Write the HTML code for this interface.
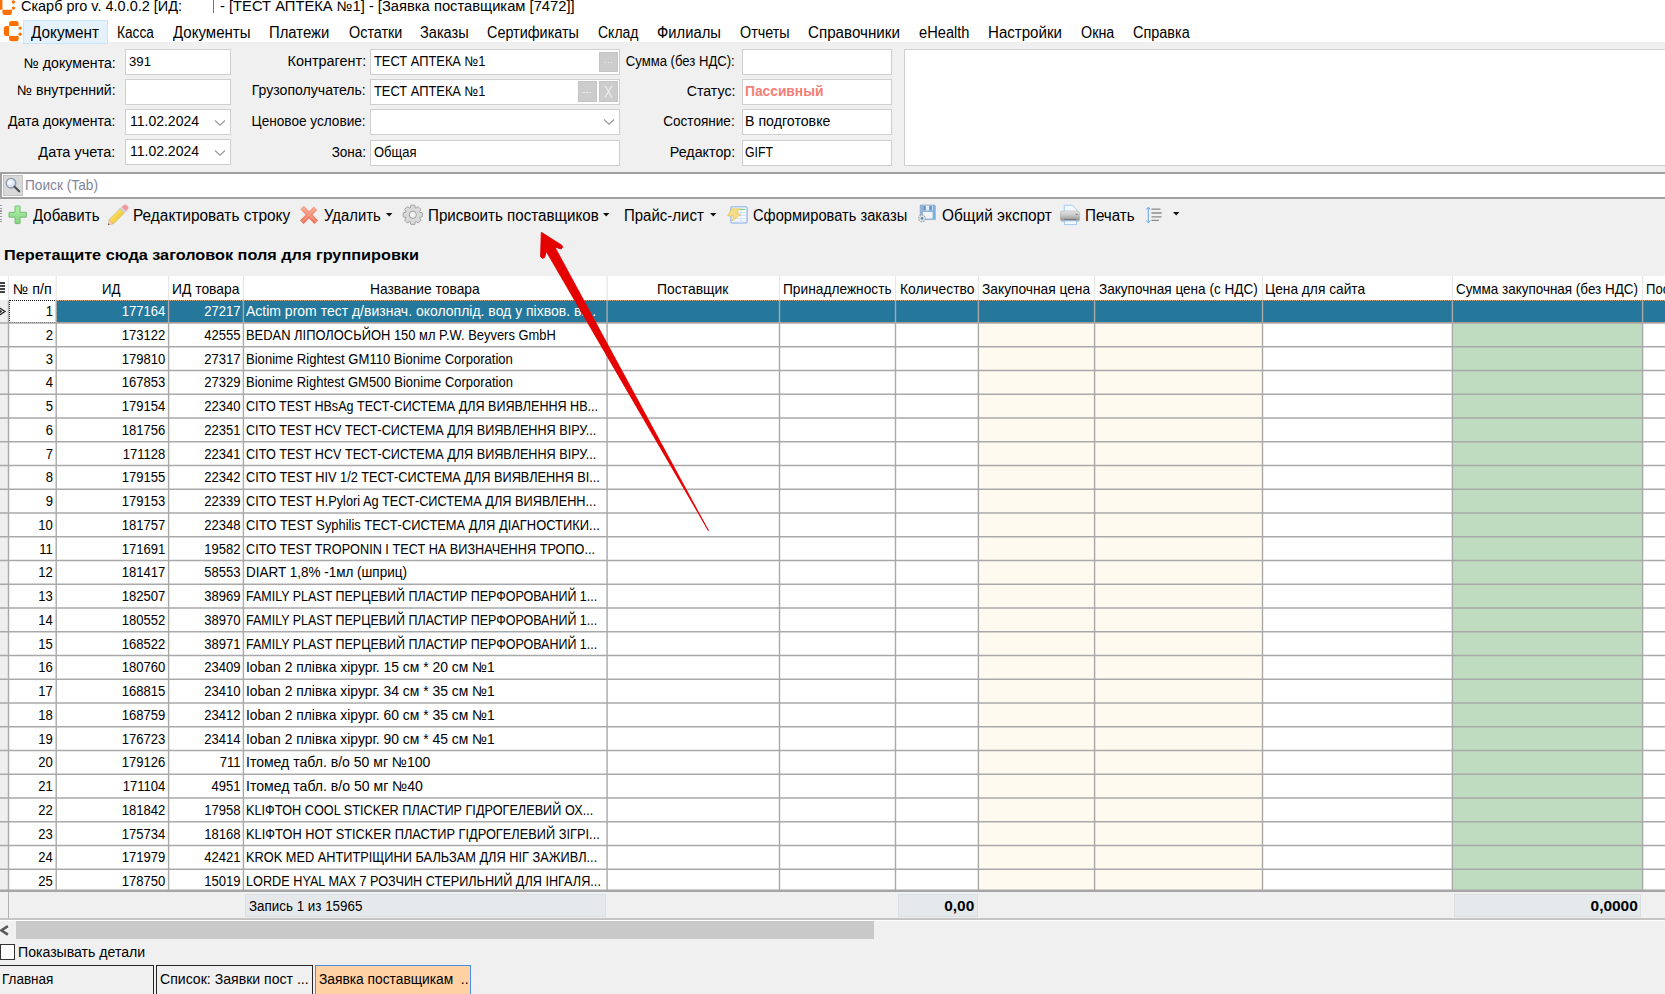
<!DOCTYPE html>
<html><head><meta charset="utf-8"><style>
html,body{margin:0;padding:0;}
body{width:1665px;height:994px;position:relative;overflow:hidden;background:#f0f0f0;font-family:"Liberation Sans", sans-serif;}
.a{position:absolute;}
.t{position:absolute;white-space:pre;}
</style></head><body>
<div class="a" style="left:0px;top:0px;width:1665px;height:42px;background:#ffffff;"></div>
<svg class="a" style="left:0;top:0" width="24" height="44"><g transform="translate(-6.7 -26.1)" fill="#ff7000">
<path d="M9.1 26 V23.2 Q9.3 21.1 11.4 21.1 H16.4 Q18.4 21.1 18.6 23.2 V26Z"/>
<path d="M9.1 26 H6 Q3.8 26.2 3.8 28.4 V33.6 Q3.8 35.8 6 35.9 H9.1Z"/>
<path d="M9.1 35.9 H18.6 V38.9 Q18.4 41.2 16.4 41.2 H11.4 Q9.3 41.2 9.1 38.9Z"/>
<circle cx="20.1" cy="28.1" r="1.65"/><circle cx="20.1" cy="34.2" r="1.65"/></g></svg>
<svg class="a" style="left:0;top:0" width="24" height="44"><g transform="translate(0 0)" fill="#ff7000">
<path d="M9.1 26 V23.2 Q9.3 21.1 11.4 21.1 H16.4 Q18.4 21.1 18.6 23.2 V26Z"/>
<path d="M9.1 26 H6 Q3.8 26.2 3.8 28.4 V33.6 Q3.8 35.8 6 35.9 H9.1Z"/>
<path d="M9.1 35.9 H18.6 V38.9 Q18.4 41.2 16.4 41.2 H11.4 Q9.3 41.2 9.1 38.9Z"/>
<circle cx="20.1" cy="28.1" r="1.65"/><circle cx="20.1" cy="34.2" r="1.65"/></g></svg>
<div class="t" id="t0" style="transform:scaleX(1.0478);top:-1px;font-size:13.8px;line-height:15px;height:15px;color:#000;left:21px;transform-origin:0 0;">Скарб pro v. 4.0.0.2 [ИД:</div>
<div class="a" style="left:213px;top:0px;width:1px;height:13px;background:#3d7fd0;"></div>
<div class="t" id="t1" style="transform:scaleX(1.0675);top:-1px;font-size:13.8px;line-height:15px;height:15px;color:#000;left:219.8px;transform-origin:0 0;">- [ТЕСТ АПТЕКА №1] - [Заявка поставщикам [7472]]</div>
<div class="a" style="left:23px;top:20px;width:85px;height:24px;background:#e5f1fb;border:1px solid #cde4f7;box-sizing:border-box;"></div>
<div class="t" id="t2" style="transform:scaleX(0.9828);top:24px;font-size:15.6px;line-height:17px;height:17px;color:#000;left:31px;transform-origin:0 0;">Документ</div>
<div class="t" id="t3" style="transform:scaleX(0.8779);top:24px;font-size:15.6px;line-height:17px;height:17px;color:#000;left:117.1px;transform-origin:0 0;">Касса</div>
<div class="t" id="t4" style="transform:scaleX(0.9640);top:24px;font-size:15.6px;line-height:17px;height:17px;color:#000;left:173px;transform-origin:0 0;">Документы</div>
<div class="t" id="t5" style="transform:scaleX(0.9534);top:24px;font-size:15.6px;line-height:17px;height:17px;color:#000;left:269.4px;transform-origin:0 0;">Платежи</div>
<div class="t" id="t6" style="transform:scaleX(0.9222);top:24px;font-size:15.6px;line-height:17px;height:17px;color:#000;left:348.6px;transform-origin:0 0;">Остатки</div>
<div class="t" id="t7" style="transform:scaleX(0.9343);top:24px;font-size:15.6px;line-height:17px;height:17px;color:#000;left:419.8px;transform-origin:0 0;">Заказы</div>
<div class="t" id="t8" style="transform:scaleX(0.9235);top:24px;font-size:15.6px;line-height:17px;height:17px;color:#000;left:487.4px;transform-origin:0 0;">Сертификаты</div>
<div class="t" id="t9" style="transform:scaleX(0.8972);top:24px;font-size:15.6px;line-height:17px;height:17px;color:#000;left:598.2px;transform-origin:0 0;">Склад</div>
<div class="t" id="t10" style="transform:scaleX(0.9486);top:24px;font-size:15.6px;line-height:17px;height:17px;color:#000;left:656.8px;transform-origin:0 0;">Филиалы</div>
<div class="t" id="t11" style="transform:scaleX(0.9201);top:24px;font-size:15.6px;line-height:17px;height:17px;color:#000;left:739.6px;transform-origin:0 0;">Отчеты</div>
<div class="t" id="t12" style="transform:scaleX(0.9728);top:24px;font-size:15.6px;line-height:17px;height:17px;color:#000;left:808.1px;transform-origin:0 0;">Справочники</div>
<div class="t" id="t13" style="transform:scaleX(0.9395);top:24px;font-size:15.6px;line-height:17px;height:17px;color:#000;left:918.9px;transform-origin:0 0;">eHealth</div>
<div class="t" id="t14" style="transform:scaleX(0.9664);top:24px;font-size:15.6px;line-height:17px;height:17px;color:#000;left:988.1px;transform-origin:0 0;">Настройки</div>
<div class="t" id="t15" style="transform:scaleX(0.9186);top:24px;font-size:15.6px;line-height:17px;height:17px;color:#000;left:1080.9px;transform-origin:0 0;">Окна</div>
<div class="t" id="t16" style="transform:scaleX(0.9267);top:24px;font-size:15.6px;line-height:17px;height:17px;color:#000;left:1133.2px;transform-origin:0 0;">Справка</div>
<div class="t" id="t17" style="transform:scaleX(1.0251);top:56px;font-size:13.8px;line-height:15px;height:15px;color:#000;right:1549.5px;transform-origin:100% 0;">№ документа:</div>
<div class="t" id="t18" style="transform:scaleX(1.0213);top:83px;font-size:13.8px;line-height:15px;height:15px;color:#000;right:1549.5px;transform-origin:100% 0;">№ внутренний:</div>
<div class="t" id="t19" style="transform:scaleX(1.0190);top:114px;font-size:13.8px;line-height:15px;height:15px;color:#000;right:1549.5px;transform-origin:100% 0;">Дата документа:</div>
<div class="t" id="t20" style="transform:scaleX(1.0496);top:145px;font-size:13.8px;line-height:15px;height:15px;color:#000;right:1549.5px;transform-origin:100% 0;">Дата учета:</div>
<div class="a" style="left:125px;top:49px;width:106px;height:26px;background:#ffffff;border:1px solid #cfcfcf;box-sizing:border-box;"></div>
<div class="a" style="left:125px;top:79px;width:106px;height:26px;background:#ffffff;border:1px solid #cfcfcf;box-sizing:border-box;"></div>
<div class="a" style="left:125px;top:109px;width:106px;height:26px;background:#ffffff;border:1px solid #cfcfcf;box-sizing:border-box;"></div>
<div class="a" style="left:125px;top:139px;width:106px;height:26px;background:#ffffff;border:1px solid #cfcfcf;box-sizing:border-box;"></div>
<div class="t" id="t21" style="transform:scaleX(0.9764);top:54px;font-size:13.5px;line-height:15px;height:15px;color:#000;left:129px;transform-origin:0 0;">391</div>
<div class="t" id="t22" style="transform:scaleX(1.0142);top:114px;font-size:13.8px;line-height:15px;height:15px;color:#000;left:130.2px;transform-origin:0 0;">11.02.2024</div>
<div class="t" id="t23" style="transform:scaleX(1.0142);top:144px;font-size:13.8px;line-height:15px;height:15px;color:#000;left:130.2px;transform-origin:0 0;">11.02.2024</div>
<svg class="a" style="left:214px;top:118.5px" width="12" height="8"><path d="M1 1.5 L6 6.2 L11 1.5" fill="none" stroke="#9a9a9a" stroke-width="1.2"/></svg>
<svg class="a" style="left:214px;top:148.5px" width="12" height="8"><path d="M1 1.5 L6 6.2 L11 1.5" fill="none" stroke="#9a9a9a" stroke-width="1.2"/></svg>
<div class="t" id="t24" style="transform:scaleX(1.0456);top:54px;font-size:13.8px;line-height:15px;height:15px;color:#000;right:1299px;transform-origin:100% 0;">Контрагент:</div>
<div class="t" id="t25" style="transform:scaleX(1.0200);top:83px;font-size:13.8px;line-height:15px;height:15px;color:#000;right:1299px;transform-origin:100% 0;">Грузополучатель:</div>
<div class="t" id="t26" style="transform:scaleX(0.9862);top:114px;font-size:13.8px;line-height:15px;height:15px;color:#000;right:1299px;transform-origin:100% 0;">Ценовое условие:</div>
<div class="t" id="t27" style="transform:scaleX(0.9818);top:145px;font-size:13.8px;line-height:15px;height:15px;color:#000;right:1299px;transform-origin:100% 0;">Зона:</div>
<div class="a" style="left:370px;top:49px;width:250px;height:26px;background:#ffffff;border:1px solid #cfcfcf;box-sizing:border-box;"></div>
<div class="a" style="left:370px;top:79px;width:250px;height:26px;background:#ffffff;border:1px solid #cfcfcf;box-sizing:border-box;"></div>
<div class="a" style="left:370px;top:109px;width:250px;height:26px;background:#ffffff;border:1px solid #cfcfcf;box-sizing:border-box;"></div>
<div class="a" style="left:370px;top:140px;width:250px;height:26px;background:#ffffff;border:1px solid #cfcfcf;box-sizing:border-box;"></div>
<div class="t" id="t28" style="transform:scaleX(0.9327);top:54px;font-size:13.8px;line-height:15px;height:15px;color:#000;left:374.3px;transform-origin:0 0;">ТЕСТ АПТЕКА №1</div>
<div class="t" id="t29" style="transform:scaleX(0.9327);top:84px;font-size:13.8px;line-height:15px;height:15px;color:#000;left:374.3px;transform-origin:0 0;">ТЕСТ АПТЕКА №1</div>
<div class="t" id="t30" style="transform:scaleX(0.9415);top:145px;font-size:13.8px;line-height:15px;height:15px;color:#000;left:374.3px;transform-origin:0 0;">Общая</div>
<div class="a" style="left:599px;top:51.5px;width:19px;height:20.5px;background:#cccccc;border:1px solid #c4c4c4;box-sizing:border-box;"></div>
<div class="a" style="left:604.5px;top:61.75px;width:1.6px;height:1.2px;background:#ececec;"></div>
<div class="a" style="left:607.5px;top:61.75px;width:1.6px;height:1.2px;background:#ececec;"></div>
<div class="a" style="left:610.5px;top:61.75px;width:1.6px;height:1.2px;background:#ececec;"></div>
<div class="a" style="left:578px;top:81.2px;width:18.5px;height:21px;background:#cccccc;border:1px solid #c4c4c4;box-sizing:border-box;"></div>
<div class="a" style="left:583.25px;top:91.7px;width:1.6px;height:1.2px;background:#ececec;"></div>
<div class="a" style="left:586.25px;top:91.7px;width:1.6px;height:1.2px;background:#ececec;"></div>
<div class="a" style="left:589.25px;top:91.7px;width:1.6px;height:1.2px;background:#ececec;"></div>
<div class="a" style="left:599px;top:81.2px;width:19px;height:21px;background:#cccccc;border:1px solid #c4c4c4;box-sizing:border-box;"></div>
<svg class="a" style="left:599px;top:81.2px" width="19" height="21"><path d="M6.0 4.5 L13.0 16.5 M13.0 4.5 L6.0 16.5" stroke="#ededed" stroke-width="1.3"/></svg>
<svg class="a" style="left:603px;top:118px" width="12" height="8"><path d="M1 1.5 L6 6.2 L11 1.5" fill="none" stroke="#9a9a9a" stroke-width="1.2"/></svg>
<div class="t" id="t31" style="transform:scaleX(0.9498);top:54px;font-size:13.8px;line-height:15px;height:15px;color:#000;right:930px;transform-origin:100% 0;">Сумма (без НДС):</div>
<div class="t" id="t32" style="transform:scaleX(1.0263);top:84px;font-size:13.8px;line-height:15px;height:15px;color:#000;right:930px;transform-origin:100% 0;">Статус:</div>
<div class="t" id="t33" style="transform:scaleX(0.9837);top:114px;font-size:13.8px;line-height:15px;height:15px;color:#000;right:930px;transform-origin:100% 0;">Состояние:</div>
<div class="t" id="t34" style="transform:scaleX(1.0342);top:145px;font-size:13.8px;line-height:15px;height:15px;color:#000;right:930px;transform-origin:100% 0;">Редактор:</div>
<div class="a" style="left:741.5px;top:49px;width:150px;height:26px;background:#ffffff;border:1px solid #cfcfcf;box-sizing:border-box;"></div>
<div class="a" style="left:741.5px;top:79px;width:150px;height:26px;background:#ffffff;border:1px solid #cfcfcf;box-sizing:border-box;"></div>
<div class="a" style="left:741.5px;top:109px;width:150px;height:26px;background:#ffffff;border:1px solid #cfcfcf;box-sizing:border-box;"></div>
<div class="a" style="left:741.5px;top:140px;width:150px;height:26px;background:#ffffff;border:1px solid #cfcfcf;box-sizing:border-box;"></div>
<div class="t" id="t35" style="transform:scaleX(0.9987);top:84px;font-size:13.8px;line-height:15px;height:15px;color:#f47e76;font-weight:bold;left:745.4px;transform-origin:0 0;">Пассивный</div>
<div class="t" id="t36" style="transform:scaleX(1.0281);top:114px;font-size:13.8px;line-height:15px;height:15px;color:#000;left:745.4px;transform-origin:0 0;">В подготовке</div>
<div class="t" id="t37" style="transform:scaleX(0.8911);top:145px;font-size:13.8px;line-height:15px;height:15px;color:#000;left:745.4px;transform-origin:0 0;">GIFT</div>
<div class="a" style="left:904px;top:49px;width:800px;height:117px;background:#ffffff;border:1px solid #cfcfcf;box-sizing:border-box;"></div>
<div class="a" style="left:0px;top:172px;width:1665px;height:27px;background:#ffffff;border:2px solid #a0a0a0;box-sizing:border-box;border-right:none;"></div>
<div class="a" style="left:3px;top:175px;width:20px;height:21px;background:#d9d9d9;border:1px solid #c2c2c2;box-sizing:border-box;"></div>
<svg class="a" style="left:4px;top:176px" width="18" height="19" viewBox="0 0 18 19">
<defs><radialGradient id="mg" cx="0.4" cy="0.4" r="0.6"><stop offset="0" stop-color="#ffffff"/><stop offset="1" stop-color="#c7d3ea"/></radialGradient></defs>
<circle cx="7" cy="7.2" r="4.8" fill="url(#mg)" stroke="#8d98ad" stroke-width="1.3"/>
<path d="M10.5 10.8 L15.2 15.3" stroke="#4f4f4f" stroke-width="2.2" stroke-linecap="round"/></svg>
<div class="t" id="t38" style="transform:scaleX(0.9584);top:177px;font-size:14.3px;line-height:16px;height:16px;color:#7f849c;left:24.9px;transform-origin:0 0;">Поиск (Tab)</div>
<div class="a" style="left:0px;top:205.0px;width:2px;height:1.3px;background:#9a9a9a;"></div>
<div class="a" style="left:0px;top:207.7px;width:2px;height:1.3px;background:#9a9a9a;"></div>
<div class="a" style="left:0px;top:210.4px;width:2px;height:1.3px;background:#9a9a9a;"></div>
<div class="a" style="left:0px;top:213.1px;width:2px;height:1.3px;background:#9a9a9a;"></div>
<div class="a" style="left:0px;top:215.8px;width:2px;height:1.3px;background:#9a9a9a;"></div>
<div class="a" style="left:0px;top:218.5px;width:2px;height:1.3px;background:#9a9a9a;"></div>
<div class="a" style="left:0px;top:221.2px;width:2px;height:1.3px;background:#9a9a9a;"></div>
<div class="t" id="t39" style="transform:scaleX(0.9649);top:207px;font-size:15.6px;line-height:17px;height:17px;color:#000;left:32.5px;transform-origin:0 0;">Добавить</div>
<div class="t" id="t40" style="transform:scaleX(0.9878);top:207px;font-size:15.6px;line-height:17px;height:17px;color:#000;left:133px;transform-origin:0 0;">Редактировать строку</div>
<div class="t" id="t41" style="transform:scaleX(0.9539);top:207px;font-size:15.6px;line-height:17px;height:17px;color:#000;left:323.8px;transform-origin:0 0;">Удалить</div>
<div class="t" id="t42" style="transform:scaleX(0.9709);top:207px;font-size:15.6px;line-height:17px;height:17px;color:#000;left:428px;transform-origin:0 0;">Присвоить поставщиков</div>
<div class="t" id="t43" style="transform:scaleX(0.9613);top:207px;font-size:15.6px;line-height:17px;height:17px;color:#000;left:623.7px;transform-origin:0 0;">Прайс-лист</div>
<div class="t" id="t44" style="transform:scaleX(0.9403);top:207px;font-size:15.6px;line-height:17px;height:17px;color:#000;left:752.7px;transform-origin:0 0;">Сформировать заказы</div>
<div class="t" id="t45" style="transform:scaleX(0.9902);top:207px;font-size:15.6px;line-height:17px;height:17px;color:#000;left:941.6px;transform-origin:0 0;">Общий экспорт</div>
<div class="t" id="t46" style="transform:scaleX(0.9727);top:207px;font-size:15.6px;line-height:17px;height:17px;color:#000;left:1085.4px;transform-origin:0 0;">Печать</div>
<svg class="a" style="left:385.6px;top:212.5px" width="8" height="5"><path d="M0 0 H6.4 L3.2 3.6Z" fill="#111"/></svg>
<svg class="a" style="left:603px;top:212.5px" width="8" height="5"><path d="M0 0 H6.4 L3.2 3.6Z" fill="#111"/></svg>
<svg class="a" style="left:710px;top:212.5px" width="8" height="5"><path d="M0 0 H6.4 L3.2 3.6Z" fill="#111"/></svg>
<svg class="a" style="left:1172.6px;top:212.2px" width="8" height="5"><path d="M0 0 H6.4 L3.2 3.6Z" fill="#111"/></svg>
<svg class="a" style="left:0;top:165px" width="30" height="62">
<defs><linearGradient id="pg" x1="0" y1="0" x2="0" y2="1"><stop offset="0" stop-color="#aef2a8"/><stop offset="1" stop-color="#86d283"/></linearGradient></defs>
<path d="M15.4 41 H19.7 Q20.1 41 20.1 41.4 V47.3 H26 Q26.4 47.3 26.4 47.7 V51.8 Q26.4 52.2 26 52.2 H20.1 V58.2 Q20.1 58.6 19.7 58.6 H15.4 Q15 58.6 15 58.2 V52.2 H9.4 Q9 52.2 9 51.8 V47.7 Q9 47.3 9.4 47.3 H15 V41.4 Q15 41 15.4 41Z" fill="url(#pg)" stroke="#6db86b" stroke-width="0.9"/></svg>
<svg class="a" style="left:100px;top:200px" width="30" height="28">
<defs><linearGradient id="pcl" x1="0" y1="0" x2="1" y2="1"><stop offset="0" stop-color="#fff3b0"/><stop offset="0.5" stop-color="#f5d54c"/><stop offset="1" stop-color="#d9ae2a"/></linearGradient></defs>
<path d="M9.06 19.7 L20.02 8.74 L24.26 12.98 L13.3 23.94Z" fill="url(#pcl)" stroke="#d2b04a" stroke-width="0.6"/>
<path d="M20.02 8.74 L21.79 6.97 L26.03 11.21 L24.26 12.98Z" fill="#d6d6d6" stroke="#b8b8b8" stroke-width="0.5"/>
<path d="M21.79 6.97 L23.2 5.56 A3 3 0 0 1 27.44 9.8 L26.03 11.21Z" fill="#f39a9a"/>
<path d="M9.06 19.7 L13.3 23.94 L8 25Z" fill="#f6c9a8" stroke="#e0a080" stroke-width="0.4"/>
<path d="M8 25 L8.35 23.23 L9.77 24.65Z" fill="#555"/></svg>
<svg class="a" style="left:295px;top:200px" width="28" height="28">
<defs><linearGradient id="xg" x1="0" y1="0" x2="0" y2="1"><stop offset="0" stop-color="#f7a28c"/><stop offset="1" stop-color="#ee6f58"/></linearGradient></defs>
<path d="M7.1 7.5 L21.3 22.2 M20.5 8.2 L6.8 22.2" stroke="url(#xg)" stroke-width="5" stroke-linecap="butt" fill="none"/>
<path d="M7.1 7.5 L21.3 22.2 M20.5 8.2 L6.8 22.2" stroke="#fbb8a6" stroke-width="1.2" stroke-opacity="0.6" fill="none"/></svg>
<svg class="a" style="left:398px;top:200px" width="30" height="30">
<path d="M12.23 7.97 L12.85 5.20 L16.75 5.20 L17.37 7.97 L17.81 8.15 L20.21 6.63 L22.97 9.39 L21.45 11.79 L21.63 12.23 L24.40 12.85 L24.40 16.75 L21.63 17.37 L21.45 17.81 L22.97 20.21 L20.21 22.97 L17.81 21.45 L17.37 21.63 L16.75 24.40 L12.85 24.40 L12.23 21.63 L11.79 21.45 L9.39 22.97 L6.63 20.21 L8.15 17.81 L7.97 17.37 L5.20 16.75 L5.20 12.85 L7.97 12.23 L8.15 11.79 L6.63 9.39 L9.39 6.63 L11.79 8.15Z" fill="#dadada" stroke="#a2a2a2" stroke-width="1" stroke-linejoin="round"/>
<circle cx="14.8" cy="14.8" r="3.6" fill="#f2f2f2" stroke="#9c9c9c" stroke-width="1"/></svg>
<svg class="a" style="left:722px;top:200px" width="30" height="30">
<rect x="8.9" y="6.8" width="16.2" height="16.2" rx="1.5" fill="#fbfdff" stroke="#a6c2e8" stroke-width="1.6"/>
<path d="M11 12.5 H24 M11 15.5 H24 M11 18.5 H24 M11 21 H24 M19 10 V22.5" stroke="#cfe0f5" stroke-width="0.9"/>
<path d="M18 9.4 H23.3" stroke="#8cca86" stroke-width="1.3"/>
<path d="M5.7 15.7 L9.7 8.8 L18.1 8.8 L14.2 13.2 L18.7 14.6 L10 21 L12 16.2Z" fill="#f5dc86" stroke="#e2bf52" stroke-width="0.7" stroke-linejoin="round"/></svg>
<svg class="a" style="left:912px;top:200px" width="30" height="30">
<defs><linearGradient id="fg" x1="0" y1="0" x2="1" y2="1"><stop offset="0" stop-color="#9fb4d6"/><stop offset="1" stop-color="#6fb4e0"/></linearGradient></defs>
<path d="M8.2 5 H22.5 L23.3 5.8 V19.6 H8.2Z" fill="url(#fg)" stroke="#7f9cc0" stroke-width="0.6"/>
<rect x="11" y="5.6" width="9.6" height="4.8" fill="#e9eef4"/>
<rect x="11.2" y="5.8" width="2.6" height="4.5" fill="#5d95c8"/><rect x="17.2" y="5.8" width="2.6" height="4.5" fill="#5d95c8"/>
<rect x="11" y="12" width="9.6" height="6.6" fill="#f2f2f2"/>
<circle cx="10" cy="18.4" r="3.3" fill="#e6e6e6" stroke="#a9a9a9" stroke-width="1.3" stroke-dasharray="1.6 0.9"/>
<circle cx="10" cy="18.4" r="1.4" fill="#5b8fc0"/></svg>
<svg class="a" style="left:1056px;top:200px" width="30" height="30">
<defs><linearGradient id="prg" x1="0" y1="0" x2="0" y2="1"><stop offset="0" stop-color="#e4e4e4"/><stop offset="0.45" stop-color="#c4c4c4"/><stop offset="0.8" stop-color="#9a9a9a"/><stop offset="1" stop-color="#d0d0d0"/></linearGradient></defs>
<path d="M8.3 5.2 H16.3 L20.7 9.5 V11.5 H8.3Z" fill="#f2f8ff" stroke="#9fc6f0" stroke-width="0.9"/>
<rect x="4.3" y="11" width="19.4" height="10.6" rx="2.6" fill="url(#prg)" stroke="#b2b2b2" stroke-width="0.6"/>
<path d="M8.3 19.8 H20.6" stroke="#6a6a6a" stroke-width="1.1"/>
<rect x="19.6" y="13.8" width="2" height="1.1" fill="#777"/>
<rect x="8.5" y="20.9" width="12" height="3.7" fill="#f2f8ff" stroke="#9fc6f0" stroke-width="0.9"/></svg>
<svg class="a" style="left:1140px;top:204px" width="26" height="22">
<path d="M8.3 3.5 V18.5 M6.3 5.5 L8.3 3.2 L10.3 5.5 M6.3 16.5 L8.3 18.8 L10.3 16.5" stroke="#6aa6e8" stroke-width="1" fill="none"/>
<path d="M11.5 5.2 H20.5 M11.5 9 H21.6 M11.5 12.8 H21.6 M11.5 16.3 H19" stroke="#8a8a8a" stroke-width="1.3"/></svg>
<div class="t" id="t47" style="transform:scaleX(1.1135);top:247px;font-size:14.6px;line-height:16px;height:16px;color:#000;font-weight:bold;left:4px;transform-origin:0 0;">Перетащите сюда заголовок поля для группировки</div>
<div class="a" style="left:0px;top:276px;width:1665px;height:24.30000000000001px;background:#ffffff;"></div>
<div class="a" style="left:0px;top:300px;width:8.5px;height:591px;background:#efefef;"></div>
<div class="a" style="left:8.5px;top:300px;width:1656.5px;height:591px;background:#ffffff;"></div>
<div class="a" style="left:979px;top:322px;width:115.59999999999991px;height:569px;background:#fffaf0;"></div>
<div class="a" style="left:1095.4px;top:322px;width:167.0999999999999px;height:569px;background:#fffaf0;"></div>
<div class="a" style="left:1453.2px;top:322px;width:189.39999999999986px;height:569px;background:#c0dcc0;"></div>
<div class="a" style="left:57px;top:300px;width:1608px;height:23px;background:#25789b;"></div>
<div class="a" style="left:57px;top:300px;width:1608px;height:23px;box-sizing:border-box;border-top:1px dotted #e0a070;border-bottom:1px dotted #e0a070"></div>
<div class="a" style="left:9px;top:300px;width:47.5px;height:23px;box-sizing:border-box;border:1px dotted #111;background:#fff"></div>
<svg class="a" style="left:0;top:0" width="1665" height="994"><line x1="0" y1="322.95" x2="1665" y2="322.95" stroke="#a9a9a9" stroke-width="1.4"/><line x1="0" y1="346.70" x2="1665" y2="346.70" stroke="#a9a9a9" stroke-width="1.4"/><line x1="0" y1="370.45" x2="1665" y2="370.45" stroke="#a9a9a9" stroke-width="1.4"/><line x1="0" y1="394.20" x2="1665" y2="394.20" stroke="#a9a9a9" stroke-width="1.4"/><line x1="0" y1="417.95" x2="1665" y2="417.95" stroke="#a9a9a9" stroke-width="1.4"/><line x1="0" y1="441.70" x2="1665" y2="441.70" stroke="#a9a9a9" stroke-width="1.4"/><line x1="0" y1="465.45" x2="1665" y2="465.45" stroke="#a9a9a9" stroke-width="1.4"/><line x1="0" y1="489.20" x2="1665" y2="489.20" stroke="#a9a9a9" stroke-width="1.4"/><line x1="0" y1="512.95" x2="1665" y2="512.95" stroke="#a9a9a9" stroke-width="1.4"/><line x1="0" y1="536.70" x2="1665" y2="536.70" stroke="#a9a9a9" stroke-width="1.4"/><line x1="0" y1="560.45" x2="1665" y2="560.45" stroke="#a9a9a9" stroke-width="1.4"/><line x1="0" y1="584.20" x2="1665" y2="584.20" stroke="#a9a9a9" stroke-width="1.4"/><line x1="0" y1="607.95" x2="1665" y2="607.95" stroke="#a9a9a9" stroke-width="1.4"/><line x1="0" y1="631.70" x2="1665" y2="631.70" stroke="#a9a9a9" stroke-width="1.4"/><line x1="0" y1="655.45" x2="1665" y2="655.45" stroke="#a9a9a9" stroke-width="1.4"/><line x1="0" y1="679.20" x2="1665" y2="679.20" stroke="#a9a9a9" stroke-width="1.4"/><line x1="0" y1="702.95" x2="1665" y2="702.95" stroke="#a9a9a9" stroke-width="1.4"/><line x1="0" y1="726.70" x2="1665" y2="726.70" stroke="#a9a9a9" stroke-width="1.4"/><line x1="0" y1="750.45" x2="1665" y2="750.45" stroke="#a9a9a9" stroke-width="1.4"/><line x1="0" y1="774.20" x2="1665" y2="774.20" stroke="#a9a9a9" stroke-width="1.4"/><line x1="0" y1="797.95" x2="1665" y2="797.95" stroke="#a9a9a9" stroke-width="1.4"/><line x1="0" y1="821.70" x2="1665" y2="821.70" stroke="#a9a9a9" stroke-width="1.4"/><line x1="0" y1="845.45" x2="1665" y2="845.45" stroke="#a9a9a9" stroke-width="1.4"/><line x1="0" y1="869.20" x2="1665" y2="869.20" stroke="#a9a9a9" stroke-width="1.4"/><line x1="8.50" y1="300.30" x2="8.50" y2="891" stroke="#a9a9a9" stroke-width="1.4"/><line x1="8.50" y1="276" x2="8.50" y2="300.30" stroke="#e6e6e6" stroke-width="1.2"/><line x1="56.20" y1="300.30" x2="56.20" y2="891" stroke="#a9a9a9" stroke-width="1.4"/><line x1="56.20" y1="276" x2="56.20" y2="300.30" stroke="#e6e6e6" stroke-width="1.2"/><line x1="168.60" y1="300.30" x2="168.60" y2="891" stroke="#a9a9a9" stroke-width="1.4"/><line x1="168.60" y1="276" x2="168.60" y2="300.30" stroke="#e6e6e6" stroke-width="1.2"/><line x1="243.40" y1="300.30" x2="243.40" y2="891" stroke="#a9a9a9" stroke-width="1.4"/><line x1="243.40" y1="276" x2="243.40" y2="300.30" stroke="#e6e6e6" stroke-width="1.2"/><line x1="607.10" y1="300.30" x2="607.10" y2="891" stroke="#a9a9a9" stroke-width="1.4"/><line x1="607.10" y1="276" x2="607.10" y2="300.30" stroke="#e6e6e6" stroke-width="1.2"/><line x1="779.50" y1="300.30" x2="779.50" y2="891" stroke="#a9a9a9" stroke-width="1.4"/><line x1="779.50" y1="276" x2="779.50" y2="300.30" stroke="#e6e6e6" stroke-width="1.2"/><line x1="895.50" y1="300.30" x2="895.50" y2="891" stroke="#a9a9a9" stroke-width="1.4"/><line x1="895.50" y1="276" x2="895.50" y2="300.30" stroke="#e6e6e6" stroke-width="1.2"/><line x1="978.40" y1="300.30" x2="978.40" y2="891" stroke="#a9a9a9" stroke-width="1.4"/><line x1="978.40" y1="276" x2="978.40" y2="300.30" stroke="#e6e6e6" stroke-width="1.2"/><line x1="1094.60" y1="300.30" x2="1094.60" y2="891" stroke="#a9a9a9" stroke-width="1.4"/><line x1="1094.60" y1="276" x2="1094.60" y2="300.30" stroke="#e6e6e6" stroke-width="1.2"/><line x1="1262.50" y1="300.30" x2="1262.50" y2="891" stroke="#a9a9a9" stroke-width="1.4"/><line x1="1262.50" y1="276" x2="1262.50" y2="300.30" stroke="#e6e6e6" stroke-width="1.2"/><line x1="1452.40" y1="300.30" x2="1452.40" y2="891" stroke="#a9a9a9" stroke-width="1.4"/><line x1="1452.40" y1="276" x2="1452.40" y2="300.30" stroke="#e6e6e6" stroke-width="1.2"/><line x1="1642.60" y1="300.30" x2="1642.60" y2="891" stroke="#a9a9a9" stroke-width="1.4"/><line x1="1642.60" y1="276" x2="1642.60" y2="300.30" stroke="#e6e6e6" stroke-width="1.2"/><line x1="0" y1="890.8" x2="1665" y2="890.8" stroke="#a6a6a6" stroke-width="2.4"/></svg>
<div class="a" style="left:0px;top:282px;width:5px;height:1.6px;background:#444;"></div>
<div class="a" style="left:0px;top:285px;width:5px;height:1.6px;background:#444;"></div>
<div class="a" style="left:0px;top:288px;width:5px;height:1.6px;background:#444;"></div>
<div class="a" style="left:0px;top:291px;width:5px;height:1.6px;background:#444;"></div>
<svg class="a" style="left:0;top:306px" width="8" height="11"><path d="M-1 1.5 L5 5.5 L-1 9.5" fill="none" stroke="#222" stroke-width="1.3"/><circle cx="0.5" cy="5.5" r="1.2" fill="#222"/></svg>
<div class="t" id="t48" style="transform:scaleX(1.0086);top:281px;font-size:14.2px;line-height:16px;height:16px;color:#000;left:12.7px;transform-origin:0 0;">№ п/п</div>
<div class="t" id="t49" style="transform:scaleX(0.9338);top:281px;font-size:14.2px;line-height:16px;height:16px;color:#000;left:101.7px;transform-origin:0 0;">ИД</div>
<div class="t" id="t50" style="transform:scaleX(0.9764);top:281px;font-size:14.2px;line-height:16px;height:16px;color:#000;left:171.8px;transform-origin:0 0;">ИД товара</div>
<div class="t" id="t51" style="transform:scaleX(0.9740);top:281px;font-size:14.2px;line-height:16px;height:16px;color:#000;left:369.7px;transform-origin:0 0;">Название товара</div>
<div class="t" id="t52" style="transform:scaleX(0.9812);top:281px;font-size:14.2px;line-height:16px;height:16px;color:#000;left:656.8px;transform-origin:0 0;">Поставщик</div>
<div class="t" id="t53" style="transform:scaleX(0.9676);top:281px;font-size:14.2px;line-height:16px;height:16px;color:#000;left:783.3px;transform-origin:0 0;">Принадлежность</div>
<div class="t" id="t54" style="transform:scaleX(0.9777);top:281px;font-size:14.2px;line-height:16px;height:16px;color:#000;left:899.5px;transform-origin:0 0;">Количество</div>
<div class="t" id="t55" style="transform:scaleX(0.9694);top:281px;font-size:14.2px;line-height:16px;height:16px;color:#000;left:982px;transform-origin:0 0;">Закупочная цена</div>
<div class="t" id="t56" style="transform:scaleX(0.9564);top:281px;font-size:14.2px;line-height:16px;height:16px;color:#000;left:1098.6px;transform-origin:0 0;">Закупочная цена (с НДС)</div>
<div class="t" id="t57" style="transform:scaleX(0.9683);top:281px;font-size:14.2px;line-height:16px;height:16px;color:#000;left:1265.2px;transform-origin:0 0;">Цена для сайта</div>
<div class="t" id="t58" style="transform:scaleX(0.9483);top:281px;font-size:14.2px;line-height:16px;height:16px;color:#000;left:1456px;transform-origin:0 0;">Сумма закупочная (без НДС)</div>
<div class="t" id="t59" style="transform:scaleX(0.9200);top:281px;font-size:14.2px;line-height:16px;height:16px;color:#000;left:1645.5px;transform-origin:0 0;">Пос</div>
<div class="t" id="t60" style="transform:scaleX(0.9200);top:303px;font-size:14.2px;line-height:16px;height:16px;color:#000;right:1612.5px;transform-origin:100% 0;">1</div>
<div class="t" id="t61" style="transform:scaleX(0.9200);top:303px;font-size:14.2px;line-height:16px;height:16px;color:#ffffff;right:1500px;transform-origin:100% 0;">177164</div>
<div class="t" id="t62" style="transform:scaleX(0.9200);top:303px;font-size:14.2px;line-height:16px;height:16px;color:#ffffff;right:1424.5px;transform-origin:100% 0;">27217</div>
<div class="t" id="t63" style="transform:scaleX(0.9862);top:303px;font-size:14.2px;line-height:16px;height:16px;color:#ffffff;left:245.8px;transform-origin:0 0;">Actim prom тест д/визнач. околоплід. вод у піхвов. ві...</div>
<div class="t" id="t64" style="transform:scaleX(0.9200);top:327px;font-size:14.2px;line-height:16px;height:16px;color:#000;right:1612.5px;transform-origin:100% 0;">2</div>
<div class="t" id="t65" style="transform:scaleX(0.9200);top:327px;font-size:14.2px;line-height:16px;height:16px;color:#000;right:1500px;transform-origin:100% 0;">173122</div>
<div class="t" id="t66" style="transform:scaleX(0.9200);top:327px;font-size:14.2px;line-height:16px;height:16px;color:#000;right:1424.5px;transform-origin:100% 0;">42555</div>
<div class="t" id="t67" style="transform:scaleX(0.9103);top:327px;font-size:14.2px;line-height:16px;height:16px;color:#000;left:245.8px;transform-origin:0 0;">BEDAN ЛІПОЛОСЬЙОН 150 мл P.W. Beyvers GmbH</div>
<div class="t" id="t68" style="transform:scaleX(0.9200);top:351px;font-size:14.2px;line-height:16px;height:16px;color:#000;right:1612.5px;transform-origin:100% 0;">3</div>
<div class="t" id="t69" style="transform:scaleX(0.9200);top:351px;font-size:14.2px;line-height:16px;height:16px;color:#000;right:1500px;transform-origin:100% 0;">179810</div>
<div class="t" id="t70" style="transform:scaleX(0.9200);top:351px;font-size:14.2px;line-height:16px;height:16px;color:#000;right:1424.5px;transform-origin:100% 0;">27317</div>
<div class="t" id="t71" style="transform:scaleX(0.9205);top:351px;font-size:14.2px;line-height:16px;height:16px;color:#000;left:245.8px;transform-origin:0 0;">Bionime Rightest GM110 Bionime Corporation</div>
<div class="t" id="t72" style="transform:scaleX(0.9200);top:374px;font-size:14.2px;line-height:16px;height:16px;color:#000;right:1612.5px;transform-origin:100% 0;">4</div>
<div class="t" id="t73" style="transform:scaleX(0.9200);top:374px;font-size:14.2px;line-height:16px;height:16px;color:#000;right:1500px;transform-origin:100% 0;">167853</div>
<div class="t" id="t74" style="transform:scaleX(0.9200);top:374px;font-size:14.2px;line-height:16px;height:16px;color:#000;right:1424.5px;transform-origin:100% 0;">27329</div>
<div class="t" id="t75" style="transform:scaleX(0.9172);top:374px;font-size:14.2px;line-height:16px;height:16px;color:#000;left:245.8px;transform-origin:0 0;">Bionime Rightest GM500 Bionime Corporation</div>
<div class="t" id="t76" style="transform:scaleX(0.9200);top:398px;font-size:14.2px;line-height:16px;height:16px;color:#000;right:1612.5px;transform-origin:100% 0;">5</div>
<div class="t" id="t77" style="transform:scaleX(0.9200);top:398px;font-size:14.2px;line-height:16px;height:16px;color:#000;right:1500px;transform-origin:100% 0;">179154</div>
<div class="t" id="t78" style="transform:scaleX(0.9200);top:398px;font-size:14.2px;line-height:16px;height:16px;color:#000;right:1424.5px;transform-origin:100% 0;">22340</div>
<div class="t" id="t79" style="transform:scaleX(0.8855);top:398px;font-size:14.2px;line-height:16px;height:16px;color:#000;left:245.8px;transform-origin:0 0;">CITO TEST HBsAg ТЕСТ-СИСТЕМА ДЛЯ ВИЯВЛЕННЯ НВ...</div>
<div class="t" id="t80" style="transform:scaleX(0.9200);top:422px;font-size:14.2px;line-height:16px;height:16px;color:#000;right:1612.5px;transform-origin:100% 0;">6</div>
<div class="t" id="t81" style="transform:scaleX(0.9200);top:422px;font-size:14.2px;line-height:16px;height:16px;color:#000;right:1500px;transform-origin:100% 0;">181756</div>
<div class="t" id="t82" style="transform:scaleX(0.9200);top:422px;font-size:14.2px;line-height:16px;height:16px;color:#000;right:1424.5px;transform-origin:100% 0;">22351</div>
<div class="t" id="t83" style="transform:scaleX(0.8904);top:422px;font-size:14.2px;line-height:16px;height:16px;color:#000;left:245.8px;transform-origin:0 0;">CITO TEST HCV ТЕСТ-СИСТЕМА ДЛЯ ВИЯВЛЕННЯ ВІРУ...</div>
<div class="t" id="t84" style="transform:scaleX(0.9200);top:446px;font-size:14.2px;line-height:16px;height:16px;color:#000;right:1612.5px;transform-origin:100% 0;">7</div>
<div class="t" id="t85" style="transform:scaleX(0.9200);top:446px;font-size:14.2px;line-height:16px;height:16px;color:#000;right:1500px;transform-origin:100% 0;">171128</div>
<div class="t" id="t86" style="transform:scaleX(0.9200);top:446px;font-size:14.2px;line-height:16px;height:16px;color:#000;right:1424.5px;transform-origin:100% 0;">22341</div>
<div class="t" id="t87" style="transform:scaleX(0.8904);top:446px;font-size:14.2px;line-height:16px;height:16px;color:#000;left:245.8px;transform-origin:0 0;">CITO TEST HCV ТЕСТ-СИСТЕМА ДЛЯ ВИЯВЛЕННЯ ВІРУ...</div>
<div class="t" id="t88" style="transform:scaleX(0.9200);top:469px;font-size:14.2px;line-height:16px;height:16px;color:#000;right:1612.5px;transform-origin:100% 0;">8</div>
<div class="t" id="t89" style="transform:scaleX(0.9200);top:469px;font-size:14.2px;line-height:16px;height:16px;color:#000;right:1500px;transform-origin:100% 0;">179155</div>
<div class="t" id="t90" style="transform:scaleX(0.9200);top:469px;font-size:14.2px;line-height:16px;height:16px;color:#000;right:1424.5px;transform-origin:100% 0;">22342</div>
<div class="t" id="t91" style="transform:scaleX(0.8971);top:469px;font-size:14.2px;line-height:16px;height:16px;color:#000;left:245.8px;transform-origin:0 0;">CITO TEST HIV 1/2 ТЕСТ-СИСТЕМА ДЛЯ ВИЯВЛЕННЯ ВІ...</div>
<div class="t" id="t92" style="transform:scaleX(0.9200);top:493px;font-size:14.2px;line-height:16px;height:16px;color:#000;right:1612.5px;transform-origin:100% 0;">9</div>
<div class="t" id="t93" style="transform:scaleX(0.9200);top:493px;font-size:14.2px;line-height:16px;height:16px;color:#000;right:1500px;transform-origin:100% 0;">179153</div>
<div class="t" id="t94" style="transform:scaleX(0.9200);top:493px;font-size:14.2px;line-height:16px;height:16px;color:#000;right:1424.5px;transform-origin:100% 0;">22339</div>
<div class="t" id="t95" style="transform:scaleX(0.8987);top:493px;font-size:14.2px;line-height:16px;height:16px;color:#000;left:245.8px;transform-origin:0 0;">CITO TEST H.Pylori Ag ТЕСТ-СИСТЕМА ДЛЯ ВИЯВЛЕНН...</div>
<div class="t" id="t96" style="transform:scaleX(0.9200);top:517px;font-size:14.2px;line-height:16px;height:16px;color:#000;right:1612.5px;transform-origin:100% 0;">10</div>
<div class="t" id="t97" style="transform:scaleX(0.9200);top:517px;font-size:14.2px;line-height:16px;height:16px;color:#000;right:1500px;transform-origin:100% 0;">181757</div>
<div class="t" id="t98" style="transform:scaleX(0.9200);top:517px;font-size:14.2px;line-height:16px;height:16px;color:#000;right:1424.5px;transform-origin:100% 0;">22348</div>
<div class="t" id="t99" style="transform:scaleX(0.9096);top:517px;font-size:14.2px;line-height:16px;height:16px;color:#000;left:245.8px;transform-origin:0 0;">CITO TEST Syphilis ТЕСТ-СИСТЕМА ДЛЯ ДІАГНОСТИКИ...</div>
<div class="t" id="t100" style="transform:scaleX(0.9200);top:541px;font-size:14.2px;line-height:16px;height:16px;color:#000;right:1612.5px;transform-origin:100% 0;">11</div>
<div class="t" id="t101" style="transform:scaleX(0.9200);top:541px;font-size:14.2px;line-height:16px;height:16px;color:#000;right:1500px;transform-origin:100% 0;">171691</div>
<div class="t" id="t102" style="transform:scaleX(0.9200);top:541px;font-size:14.2px;line-height:16px;height:16px;color:#000;right:1424.5px;transform-origin:100% 0;">19582</div>
<div class="t" id="t103" style="transform:scaleX(0.8944);top:541px;font-size:14.2px;line-height:16px;height:16px;color:#000;left:245.8px;transform-origin:0 0;">CITO TEST TROPONIN I ТЕСТ НА ВИЗНАЧЕННЯ ТРОПО...</div>
<div class="t" id="t104" style="transform:scaleX(0.9200);top:564px;font-size:14.2px;line-height:16px;height:16px;color:#000;right:1612.5px;transform-origin:100% 0;">12</div>
<div class="t" id="t105" style="transform:scaleX(0.9200);top:564px;font-size:14.2px;line-height:16px;height:16px;color:#000;right:1500px;transform-origin:100% 0;">181417</div>
<div class="t" id="t106" style="transform:scaleX(0.9200);top:564px;font-size:14.2px;line-height:16px;height:16px;color:#000;right:1424.5px;transform-origin:100% 0;">58553</div>
<div class="t" id="t107" style="transform:scaleX(0.9502);top:564px;font-size:14.2px;line-height:16px;height:16px;color:#000;left:245.8px;transform-origin:0 0;">DIART 1,8% -1мл (шприц)</div>
<div class="t" id="t108" style="transform:scaleX(0.9200);top:588px;font-size:14.2px;line-height:16px;height:16px;color:#000;right:1612.5px;transform-origin:100% 0;">13</div>
<div class="t" id="t109" style="transform:scaleX(0.9200);top:588px;font-size:14.2px;line-height:16px;height:16px;color:#000;right:1500px;transform-origin:100% 0;">182507</div>
<div class="t" id="t110" style="transform:scaleX(0.9200);top:588px;font-size:14.2px;line-height:16px;height:16px;color:#000;right:1424.5px;transform-origin:100% 0;">38969</div>
<div class="t" id="t111" style="transform:scaleX(0.8801);top:588px;font-size:14.2px;line-height:16px;height:16px;color:#000;left:245.8px;transform-origin:0 0;">FAMILY PLAST ПЕРЦЕВИЙ ПЛАСТИР ПЕРФОРОВАНИЙ 1...</div>
<div class="t" id="t112" style="transform:scaleX(0.9200);top:612px;font-size:14.2px;line-height:16px;height:16px;color:#000;right:1612.5px;transform-origin:100% 0;">14</div>
<div class="t" id="t113" style="transform:scaleX(0.9200);top:612px;font-size:14.2px;line-height:16px;height:16px;color:#000;right:1500px;transform-origin:100% 0;">180552</div>
<div class="t" id="t114" style="transform:scaleX(0.9200);top:612px;font-size:14.2px;line-height:16px;height:16px;color:#000;right:1424.5px;transform-origin:100% 0;">38970</div>
<div class="t" id="t115" style="transform:scaleX(0.8801);top:612px;font-size:14.2px;line-height:16px;height:16px;color:#000;left:245.8px;transform-origin:0 0;">FAMILY PLAST ПЕРЦЕВИЙ ПЛАСТИР ПЕРФОРОВАНИЙ 1...</div>
<div class="t" id="t116" style="transform:scaleX(0.9200);top:636px;font-size:14.2px;line-height:16px;height:16px;color:#000;right:1612.5px;transform-origin:100% 0;">15</div>
<div class="t" id="t117" style="transform:scaleX(0.9200);top:636px;font-size:14.2px;line-height:16px;height:16px;color:#000;right:1500px;transform-origin:100% 0;">168522</div>
<div class="t" id="t118" style="transform:scaleX(0.9200);top:636px;font-size:14.2px;line-height:16px;height:16px;color:#000;right:1424.5px;transform-origin:100% 0;">38971</div>
<div class="t" id="t119" style="transform:scaleX(0.8801);top:636px;font-size:14.2px;line-height:16px;height:16px;color:#000;left:245.8px;transform-origin:0 0;">FAMILY PLAST ПЕРЦЕВИЙ ПЛАСТИР ПЕРФОРОВАНИЙ 1...</div>
<div class="t" id="t120" style="transform:scaleX(0.9200);top:659px;font-size:14.2px;line-height:16px;height:16px;color:#000;right:1612.5px;transform-origin:100% 0;">16</div>
<div class="t" id="t121" style="transform:scaleX(0.9200);top:659px;font-size:14.2px;line-height:16px;height:16px;color:#000;right:1500px;transform-origin:100% 0;">180760</div>
<div class="t" id="t122" style="transform:scaleX(0.9200);top:659px;font-size:14.2px;line-height:16px;height:16px;color:#000;right:1424.5px;transform-origin:100% 0;">23409</div>
<div class="t" id="t123" style="transform:scaleX(0.9795);top:659px;font-size:14.2px;line-height:16px;height:16px;color:#000;left:245.8px;transform-origin:0 0;">Ioban 2 плівка хірург. 15 см * 20 см №1</div>
<div class="t" id="t124" style="transform:scaleX(0.9200);top:683px;font-size:14.2px;line-height:16px;height:16px;color:#000;right:1612.5px;transform-origin:100% 0;">17</div>
<div class="t" id="t125" style="transform:scaleX(0.9200);top:683px;font-size:14.2px;line-height:16px;height:16px;color:#000;right:1500px;transform-origin:100% 0;">168815</div>
<div class="t" id="t126" style="transform:scaleX(0.9200);top:683px;font-size:14.2px;line-height:16px;height:16px;color:#000;right:1424.5px;transform-origin:100% 0;">23410</div>
<div class="t" id="t127" style="transform:scaleX(0.9795);top:683px;font-size:14.2px;line-height:16px;height:16px;color:#000;left:245.8px;transform-origin:0 0;">Ioban 2 плівка хірург. 34 см * 35 см №1</div>
<div class="t" id="t128" style="transform:scaleX(0.9200);top:707px;font-size:14.2px;line-height:16px;height:16px;color:#000;right:1612.5px;transform-origin:100% 0;">18</div>
<div class="t" id="t129" style="transform:scaleX(0.9200);top:707px;font-size:14.2px;line-height:16px;height:16px;color:#000;right:1500px;transform-origin:100% 0;">168759</div>
<div class="t" id="t130" style="transform:scaleX(0.9200);top:707px;font-size:14.2px;line-height:16px;height:16px;color:#000;right:1424.5px;transform-origin:100% 0;">23412</div>
<div class="t" id="t131" style="transform:scaleX(0.9795);top:707px;font-size:14.2px;line-height:16px;height:16px;color:#000;left:245.8px;transform-origin:0 0;">Ioban 2 плівка хірург. 60 см * 35 см №1</div>
<div class="t" id="t132" style="transform:scaleX(0.9200);top:731px;font-size:14.2px;line-height:16px;height:16px;color:#000;right:1612.5px;transform-origin:100% 0;">19</div>
<div class="t" id="t133" style="transform:scaleX(0.9200);top:731px;font-size:14.2px;line-height:16px;height:16px;color:#000;right:1500px;transform-origin:100% 0;">176723</div>
<div class="t" id="t134" style="transform:scaleX(0.9200);top:731px;font-size:14.2px;line-height:16px;height:16px;color:#000;right:1424.5px;transform-origin:100% 0;">23414</div>
<div class="t" id="t135" style="transform:scaleX(0.9795);top:731px;font-size:14.2px;line-height:16px;height:16px;color:#000;left:245.8px;transform-origin:0 0;">Ioban 2 плівка хірург. 90 см * 45 см №1</div>
<div class="t" id="t136" style="transform:scaleX(0.9200);top:754px;font-size:14.2px;line-height:16px;height:16px;color:#000;right:1612.5px;transform-origin:100% 0;">20</div>
<div class="t" id="t137" style="transform:scaleX(0.9200);top:754px;font-size:14.2px;line-height:16px;height:16px;color:#000;right:1500px;transform-origin:100% 0;">179126</div>
<div class="t" id="t138" style="transform:scaleX(0.9200);top:754px;font-size:14.2px;line-height:16px;height:16px;color:#000;right:1424.5px;transform-origin:100% 0;">711</div>
<div class="t" id="t139" style="transform:scaleX(0.9892);top:754px;font-size:14.2px;line-height:16px;height:16px;color:#000;left:245.8px;transform-origin:0 0;">Ітомед табл. в/о 50 мг №100</div>
<div class="t" id="t140" style="transform:scaleX(0.9200);top:778px;font-size:14.2px;line-height:16px;height:16px;color:#000;right:1612.5px;transform-origin:100% 0;">21</div>
<div class="t" id="t141" style="transform:scaleX(0.9200);top:778px;font-size:14.2px;line-height:16px;height:16px;color:#000;right:1500px;transform-origin:100% 0;">171104</div>
<div class="t" id="t142" style="transform:scaleX(0.9200);top:778px;font-size:14.2px;line-height:16px;height:16px;color:#000;right:1424.5px;transform-origin:100% 0;">4951</div>
<div class="t" id="t143" style="transform:scaleX(0.9909);top:778px;font-size:14.2px;line-height:16px;height:16px;color:#000;left:245.8px;transform-origin:0 0;">Ітомед табл. в/о 50 мг №40</div>
<div class="t" id="t144" style="transform:scaleX(0.9200);top:802px;font-size:14.2px;line-height:16px;height:16px;color:#000;right:1612.5px;transform-origin:100% 0;">22</div>
<div class="t" id="t145" style="transform:scaleX(0.9200);top:802px;font-size:14.2px;line-height:16px;height:16px;color:#000;right:1500px;transform-origin:100% 0;">181842</div>
<div class="t" id="t146" style="transform:scaleX(0.9200);top:802px;font-size:14.2px;line-height:16px;height:16px;color:#000;right:1424.5px;transform-origin:100% 0;">17958</div>
<div class="t" id="t147" style="transform:scaleX(0.8942);top:802px;font-size:14.2px;line-height:16px;height:16px;color:#000;left:245.8px;transform-origin:0 0;">KLIФTOH COOL STICKER ПЛАСТИР ГІДРОГЕЛЕВИЙ ОХ...</div>
<div class="t" id="t148" style="transform:scaleX(0.9200);top:826px;font-size:14.2px;line-height:16px;height:16px;color:#000;right:1612.5px;transform-origin:100% 0;">23</div>
<div class="t" id="t149" style="transform:scaleX(0.9200);top:826px;font-size:14.2px;line-height:16px;height:16px;color:#000;right:1500px;transform-origin:100% 0;">175734</div>
<div class="t" id="t150" style="transform:scaleX(0.9200);top:826px;font-size:14.2px;line-height:16px;height:16px;color:#000;right:1424.5px;transform-origin:100% 0;">18168</div>
<div class="t" id="t151" style="transform:scaleX(0.9024);top:826px;font-size:14.2px;line-height:16px;height:16px;color:#000;left:245.8px;transform-origin:0 0;">KLIФTOH HOT STICKER ПЛАСТИР ГІДРОГЕЛЕВИЙ ЗІГРІ...</div>
<div class="t" id="t152" style="transform:scaleX(0.9200);top:849px;font-size:14.2px;line-height:16px;height:16px;color:#000;right:1612.5px;transform-origin:100% 0;">24</div>
<div class="t" id="t153" style="transform:scaleX(0.9200);top:849px;font-size:14.2px;line-height:16px;height:16px;color:#000;right:1500px;transform-origin:100% 0;">171979</div>
<div class="t" id="t154" style="transform:scaleX(0.9200);top:849px;font-size:14.2px;line-height:16px;height:16px;color:#000;right:1424.5px;transform-origin:100% 0;">42421</div>
<div class="t" id="t155" style="transform:scaleX(0.9008);top:849px;font-size:14.2px;line-height:16px;height:16px;color:#000;left:245.8px;transform-origin:0 0;">KROK MED АНТИТРІЩИНИ БАЛЬЗАМ ДЛЯ НІГ ЗАЖИВЛ...</div>
<div class="t" id="t156" style="transform:scaleX(0.9200);top:873px;font-size:14.2px;line-height:16px;height:16px;color:#000;right:1612.5px;transform-origin:100% 0;">25</div>
<div class="t" id="t157" style="transform:scaleX(0.9200);top:873px;font-size:14.2px;line-height:16px;height:16px;color:#000;right:1500px;transform-origin:100% 0;">178750</div>
<div class="t" id="t158" style="transform:scaleX(0.9200);top:873px;font-size:14.2px;line-height:16px;height:16px;color:#000;right:1424.5px;transform-origin:100% 0;">15019</div>
<div class="t" id="t159" style="transform:scaleX(0.8940);top:873px;font-size:14.2px;line-height:16px;height:16px;color:#000;left:245.8px;transform-origin:0 0;">LORDE HYAL MAX 7 РОЗЧИН СТЕРИЛЬНИЙ ДЛЯ ІНГАЛЯ...</div>
<div class="a" style="left:245px;top:894.2px;width:361px;height:22.5px;background:#e6e9eb;border:1px solid #dcdfe2;box-sizing:border-box;"></div>
<div class="t" id="t160" style="transform:scaleX(0.9565);top:898px;font-size:14px;line-height:16px;height:16px;color:#000;left:248.7px;transform-origin:0 0;">Запись 1 из 15965</div>
<div class="a" style="left:898.3px;top:894.1px;width:79.5px;height:22.5px;background:#e6e9eb;border:1px solid #dcdfe2;box-sizing:border-box;"></div>
<div class="t" id="t161" style="transform:scaleX(1.1009);top:898px;font-size:14px;line-height:16px;height:16px;color:#000;font-weight:bold;right:691px;transform-origin:100% 0;">0,00</div>
<div class="a" style="left:1454.3px;top:894.1px;width:187px;height:22.5px;background:#e6e9eb;border:1px solid #dcdfe2;box-sizing:border-box;"></div>
<div class="t" id="t162" style="transform:scaleX(1.1044);top:898px;font-size:14px;line-height:16px;height:16px;color:#000;font-weight:bold;right:27.5px;transform-origin:100% 0;">0,0000</div>
<div class="a" style="left:8px;top:892px;width:1.3px;height:27px;background:#b0b0b0;"></div>
<div class="a" style="left:0px;top:918.2px;width:1665px;height:1.6px;background:#c4c4c4;"></div>
<div class="a" style="left:0px;top:919.8px;width:1665px;height:1.2px;background:#ffffff;"></div>
<div class="a" style="left:15.5px;top:921.3px;width:858.4px;height:18px;background:#c9c9c9;"></div>
<svg class="a" style="left:0;top:920px" width="12" height="20"><path d="M7.9 6.2 L1.3 10.4 L7.9 14.6" fill="none" stroke="#5a5a5a" stroke-width="2.6"/></svg>
<div class="a" style="left:0px;top:944.2px;width:15px;height:15.4px;background:#ffffff;border:1.3px solid #333;box-sizing:border-box;"></div>
<div class="t" id="t163" style="transform:scaleX(1.0222);top:945px;font-size:13.8px;line-height:15px;height:15px;color:#000;left:18.1px;transform-origin:0 0;">Показывать детали</div>
<div class="a" style="left:-2px;top:964.6px;width:156.2px;height:30px;background:#f0f0f0;border:1.8px solid #262626;box-sizing:border-box;"></div>
<div class="t" id="t164" style="transform:scaleX(0.9788);top:972px;font-size:13.8px;line-height:15px;height:15px;color:#000;left:2.2px;transform-origin:0 0;">Главная</div>
<div class="a" style="left:156.4px;top:964.6px;width:156.2px;height:30px;background:#f0f0f0;border:1.8px solid #262626;box-sizing:border-box;"></div>
<div class="t" id="t165" style="transform:scaleX(1.0209);top:972px;font-size:13.8px;line-height:15px;height:15px;color:#000;left:159.9px;transform-origin:0 0;">Список: Заявки пост ...</div>
<div class="a" style="left:314.6px;top:964.6px;width:156.8px;height:30px;background:#ffd1a3;border:1.8px solid #4a90e2;box-sizing:border-box;"></div>
<div class="t" id="t166" style="transform:scaleX(0.9982);top:972px;font-size:13.8px;line-height:15px;height:15px;color:#000;left:318.5px;transform-origin:0 0;white-space:pre;">Заявка поставщикам  ..</div>
<svg class="a" style="left:0;top:0" width="1665" height="994">
<defs><linearGradient id="ag" x1="0" y1="0" x2="1" y2="0.3"><stop offset="0" stop-color="#d60000"/><stop offset="1" stop-color="#f00000"/></linearGradient></defs>
<path d="M541.3 232.3 L561.8 245.2 Q563.8 247.8 561 249 L554.8 247 L708.4 530.6 L546.3 251.4 L544.6 257.6 Q542.4 259.4 540.6 256.8Z" fill="#e50000" stroke="#e50000" stroke-width="0.9" stroke-linejoin="round"/>
</svg>
</body></html>
